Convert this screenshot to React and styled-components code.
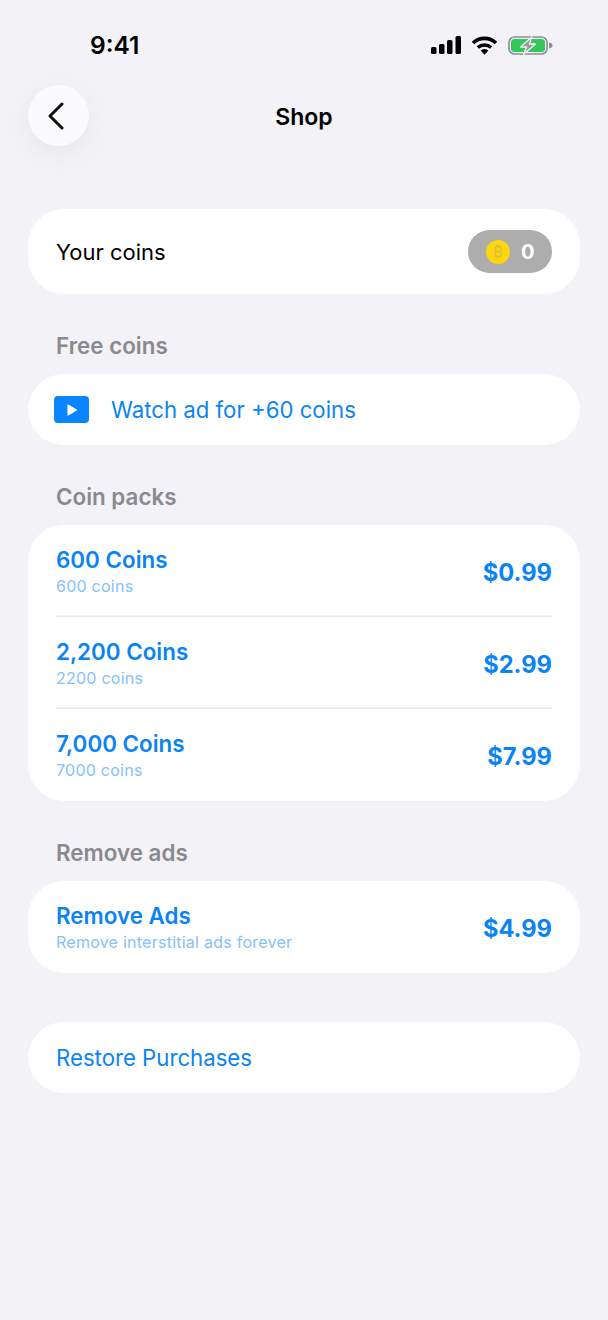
import React from 'react'
import styled, { createGlobalStyle } from 'styled-components'

const GlobalStyle = createGlobalStyle`
  html, body {
    margin: 0;
    padding: 0;
    background: #f2f2f7;
  }
  * {
    box-sizing: border-box;
  }
`

const packs = [
  { title: '600 Coins', sub: '600 coins', price: '$0.99' },
  { title: '2,200 Coins', sub: '2200 coins', price: '$2.99' },
  { title: '7,000 Coins', sub: '7000 coins', price: '$7.99' },
]

function App() {
  return (
    <Page>
      <GlobalStyle />
      <StatusBar>
        <Clock>9:41</Clock>
        <StatusIcons>
          <svg width="30" height="18" viewBox="0 0 30 18">
            <rect x="0" y="11" width="5.5" height="7" rx="1.5" fill="#000" />
            <rect x="8" y="8" width="5.5" height="10" rx="1.5" fill="#000" />
            <rect x="16" y="4" width="5.5" height="14" rx="1.5" fill="#000" />
            <rect x="24.5" y="0" width="5.5" height="18" rx="1.5" fill="#000" />
          </svg>
          <svg width="27" height="19" viewBox="0 0 27 19">
            <path d="M2 7 A16.5 16.5 0 0 1 25 7" fill="none" stroke="#000" strokeWidth="3.6" />
            <path d="M6.8 11.6 A10 10 0 0 1 20.2 11.6" fill="none" stroke="#000" strokeWidth="3.4" />
            <path d="M9.6 14.6 L13.5 18.8 L17.4 14.6 A5.6 5.6 0 0 0 9.6 14.6 Z" fill="#000" />
          </svg>
          <svg width="45" height="19" viewBox="0 0 45 19">
            <rect x="1" y="1" width="38" height="17" rx="5.5" fill="none" stroke="#8e8e93" strokeWidth="1.6" />
            <rect x="3" y="3" width="34" height="13" rx="3.5" fill="#34c759" />
            <path d="M41 6.5 C43.4 6.9 44.5 8 44.5 9.5 C44.5 11 43.4 12.1 41 12.5 Z" fill="#8e8e93" />
            <path d="M24 0.8 L12.5 11 L18.6 11 L15.6 18.2 L27.5 8 L21.4 8 Z" fill="#98989d" stroke="#f2f2f7" strokeWidth="1.3" strokeLinejoin="round" />
          </svg>
        </StatusIcons>
      </StatusBar>

      <NavBar>
        <BackButton aria-label="Back">
          <svg width="18" height="28" viewBox="0 0 18 28">
            <path d="M15 2 L3 14 L15 26" fill="none" stroke="#111" strokeWidth="3" strokeLinecap="round" strokeLinejoin="round" />
          </svg>
        </BackButton>
        <NavTitle>Shop</NavTitle>
      </NavBar>

      <Content>
        <BalanceCard>
          <BalanceLabel>Your coins</BalanceLabel>
          <CoinPill>
            <Coin>₿</Coin>
            <CoinCount>0</CoinCount>
          </CoinPill>
        </BalanceCard>

        <SectionLabel>Free coins</SectionLabel>
        <LinkCard $pad={26}>
          <PlayBadge>
            <svg width="12" height="14" viewBox="0 0 12 14">
              <path d="M2 2 L10.5 7 L2 12 Z" fill="#fff" stroke="#fff" strokeWidth="1.2" strokeLinejoin="round" />
            </svg>
          </PlayBadge>
          <LinkText>Watch ad for +60 coins</LinkText>
        </LinkCard>

        <SectionLabel>Coin packs</SectionLabel>
        <ListCard>
          {packs.map((p, i) => (
            <PackRow key={p.title} $divider={i < packs.length - 1}>
              <PackText>
                <PackTitle>{p.title}</PackTitle>
                <PackSub>{p.sub}</PackSub>
              </PackText>
              <PackPrice>{p.price}</PackPrice>
            </PackRow>
          ))}
        </ListCard>

        <SectionLabel>Remove ads</SectionLabel>
        <ListCard>
          <PackRow>
            <PackText>
              <PackTitle>Remove Ads</PackTitle>
              <PackSub>Remove interstitial ads forever</PackSub>
            </PackText>
            <PackPrice>$4.99</PackPrice>
          </PackRow>
        </ListCard>

        <RestoreCard $pad={28}>
          <LinkText>Restore Purchases</LinkText>
        </RestoreCard>
      </Content>
    </Page>
  )
}

export default App

const Page = styled.div`
  width: 608px;
  height: 1320px;
  overflow: hidden;
  background: #f2f2f7;
  font-family: Inter, "Liberation Sans", sans-serif;
  color: #000;
`

const StatusBar = styled.div`
  height: 85px;
  padding: 30px 55px 0 90px;
  display: flex;
  justify-content: space-between;
  align-items: flex-start;
`

const Clock = styled.div`
  font-size: 24.5px;
  line-height: 30px;
  font-weight: 600;
`

const StatusIcons = styled.div`
  display: flex;
  align-items: center;
  gap: 10px;
  height: 30px;
`

const NavBar = styled.div`
  position: relative;
  height: 62px;
  display: flex;
  align-items: center;
  justify-content: center;
`

const BackButton = styled.button`
  position: absolute;
  left: 28px;
  top: 0;
  width: 61px;
  height: 61px;
  border: 0;
  padding: 0 6px 0 0;
  border-radius: 50%;
  background: #fbfbfd;
  box-shadow: 0 8px 24px rgba(0, 0, 0, 0.05);
  display: flex;
  align-items: center;
  justify-content: center;
`

const NavTitle = styled.div`
  padding-top: 2px;
  font-size: 23px;
  font-weight: 600;
`

const Content = styled.div`
  padding: 62px 28px 0;
  display: flex;
  flex-direction: column;
`

const BalanceCard = styled.div`
  height: 85px;
  padding: 0 28px;
  border-radius: 36px;
  background: #fff;
  display: flex;
  align-items: center;
  justify-content: space-between;
`

const BalanceLabel = styled.div`
  font-size: 22px;
`

const CoinPill = styled.div`
  width: 84px;
  height: 43px;
  border-radius: 22px;
  background: #adadad;
  padding-left: 18px;
  display: flex;
  align-items: center;
  gap: 11px;
`

const Coin = styled.div`
  width: 24px;
  height: 24px;
  border-radius: 50%;
  background: #ffd60a;
  color: #d9b84a;
  font-size: 14px;
  display: flex;
  align-items: center;
  justify-content: center;
`

const CoinCount = styled.div`
  color: #fff;
  font-size: 20px;
  font-weight: 700;
`

const SectionLabel = styled.div`
  margin: 38px 0 14px 28px;
  font-size: 22.4px;
  line-height: 28px;
  font-weight: 600;
  color: #8a8a8e;
`

const LinkCard = styled.div`
  height: 71px;
  padding-left: ${p => p.$pad}px;
  border-radius: 36px;
  background: #fff;
  display: flex;
  align-items: center;
  gap: 22px;
`

const RestoreCard = styled(LinkCard)`
  margin-top: 49px;
`

const PlayBadge = styled.div`
  width: 35px;
  height: 27px;
  border-radius: 4px;
  background: #0a84ff;
  display: flex;
  align-items: center;
  justify-content: center;
`

const LinkText = styled.div`
  font-size: 22.2px;
  color: #0a84f5;
`

const ListCard = styled.div`
  border-radius: 36px;
  background: #fff;
  padding: 0 28px;
`

const PackRow = styled.div`
  height: 92px;
  display: flex;
  align-items: center;
  justify-content: space-between;
  box-shadow: ${p => (p.$divider ? 'inset 0 -1.5px 0 #e8e8ed' : 'none')};
`

const PackText = styled.div`
  display: flex;
  flex-direction: column;
  gap: 2px;
`

const PackTitle = styled.div`
  font-size: 22.4px;
  line-height: 28px;
  font-weight: 600;
  color: #0a84f5;
`

const PackSub = styled.div`
  font-size: 16px;
  line-height: 20px;
  letter-spacing: 0.25px;
  color: #85c1fb;
`

const PackPrice = styled.div`
  padding-top: 2px;
  font-size: 23.7px;
  font-weight: 700;
  color: #0a84f5;
`
